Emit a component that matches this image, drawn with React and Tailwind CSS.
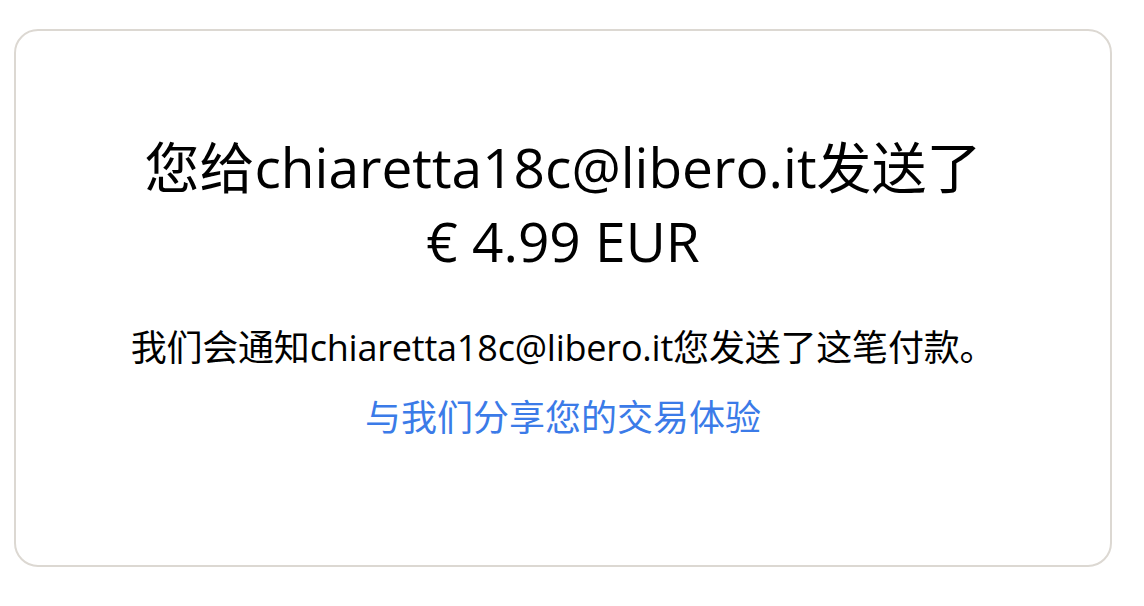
import React from 'react';

const font = { fontFamily: '"Open Sans", "Noto Sans CJK SC", sans-serif' };

const App = () => {
  return (
    <div className="min-h-screen bg-white pl-[14px] pr-[32px] pt-[29px]" style={font}>
      <div className="h-[538px] rounded-[24px] border-2 border-[#dcd8d2] flex flex-col items-center pt-[99px] text-center">
        {/* Heading */}
        <h1 className="text-[55px] leading-[74px] font-normal text-black whitespace-nowrap">
          您给chiaretta18c@libero.it发送了
          <br />
          € 4.99 EUR
        </h1>

        <p className="mt-[46px] text-[36px] leading-[48px] tracking-[-0.2px] text-black whitespace-nowrap">
          我们会通知chiaretta18c@libero.it您发送了这笔付款。
        </p>

        <a href="#" className="mt-[22px] text-[36px] leading-[48px] text-[#3b7be8]">
          与我们分享您的交易体验
        </a>
      </div>
    </div>
  );
};

export default App;
